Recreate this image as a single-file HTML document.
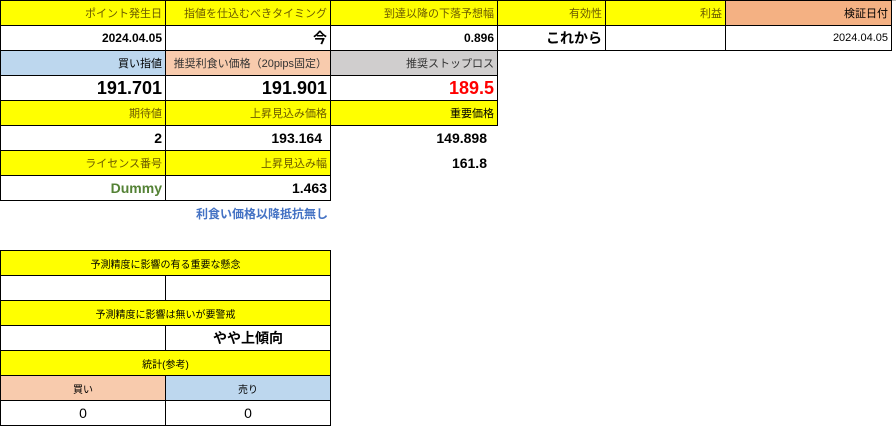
<!DOCTYPE html>
<html><head><meta charset="utf-8"><style>
body{margin:0;width:896px;height:434px;background:#fff;position:relative;overflow:hidden;font-family:"Liberation Sans","Noto Sans CJK JP",sans-serif}
.c{position:absolute;box-sizing:border-box;display:flex;align-items:center;justify-content:flex-end;padding-right:3px;font-size:11px;color:#000;white-space:nowrap}
.b{border:1px solid #000}
.y{background:#ffff00;color:#6b5a00}
.big{font-size:18px;font-weight:bold}
.m{font-size:14px;font-weight:bold}
.ctr{justify-content:center;padding-right:0}
</style></head><body>
<div style="position:absolute;left:0;top:0;width:896px;height:1px;background:#bbb"></div>
<div class="c b y" style="left:0;top:0;width:166px;height:26px">ポイント発生日</div>
<div class="c b y" style="left:165px;top:0;width:166px;height:26px">指値を仕込むべきタイミング</div>
<div class="c b y" style="left:330px;top:0;width:168px;height:26px">到達以降の下落予想幅</div>
<div class="c b y" style="left:497px;top:0;width:109px;height:26px">有効性</div>
<div class="c b y" style="left:605px;top:0;width:121px;height:26px">利益</div>
<div class="c b" style="left:725px;top:0;width:167px;height:26px;background:#f4b183">検証日付</div>
<div class="c b" style="left:0;top:25px;width:166px;height:26px;font-weight:bold;font-size:12px">2024.04.05</div>
<div class="c b m" style="left:165px;top:25px;width:166px;height:26px">今</div>
<div class="c b" style="left:330px;top:25px;width:168px;height:26px;font-weight:bold;font-size:12px">0.896</div>
<div class="c b m" style="left:497px;top:25px;width:109px;height:26px">これから</div>
<div class="c b" style="left:605px;top:25px;width:121px;height:26px"></div>
<div class="c b" style="left:725px;top:25px;width:167px;height:26px">2024.04.05</div>
<div class="c b" style="left:0;top:50px;width:166px;height:26px;background:#bdd7ee">買い指値</div>
<div class="c b" style="left:165px;top:50px;width:166px;height:26px;background:#f8cbad;color:#333">推奨利食い価格（20pips固定）</div>
<div class="c b" style="left:330px;top:50px;width:168px;height:26px;background:#d0cece;color:#333">推奨ストップロス</div>
<div class="c b big" style="left:0;top:75px;width:166px;height:26px">191.701</div>
<div class="c b big" style="left:165px;top:75px;width:166px;height:26px">191.901</div>
<div class="c b big" style="left:330px;top:75px;width:168px;height:26px;color:#ff0000">189.5</div>
<div class="c b y" style="left:0;top:100px;width:166px;height:26px">期待値</div>
<div class="c b y" style="left:165px;top:100px;width:166px;height:26px">上昇見込み価格</div>
<div class="c b y" style="left:330px;top:100px;width:168px;height:26px;color:#000">重要価格</div>
<div class="c b m" style="left:0;top:125px;width:166px;height:26px">2</div>
<div class="c b m" style="left:165px;top:125px;width:166px;height:26px;padding-right:8px">193.164</div>
<div class="c m" style="left:330px;top:125px;width:160px;height:26px">149.898</div>
<div class="c b y" style="left:0;top:150px;width:166px;height:26px">ライセンス番号</div>
<div class="c b y" style="left:165px;top:150px;width:166px;height:26px">上昇見込み幅</div>
<div class="c m" style="left:330px;top:150px;width:160px;height:26px">161.8</div>
<div class="c b m" style="left:0;top:175px;width:166px;height:26px;color:#548235">Dummy</div>
<div class="c b m" style="left:165px;top:175px;width:166px;height:26px">1.463</div>
<div class="c" style="left:165px;top:200px;width:166px;height:26px;font-weight:bold;font-size:12px;color:#4472c4">利食い価格以降抵抗無し</div>
<div class="c b y ctr" style="left:0;top:250px;width:331px;height:26px;color:#000;font-size:10px">予測精度に影響の有る重要な懸念</div>
<div class="c b" style="left:0;top:275px;width:166px;height:26px"></div>
<div class="c b" style="left:165px;top:275px;width:166px;height:26px"></div>
<div class="c b y ctr" style="left:0;top:300px;width:331px;height:26px;color:#000;font-size:10px">予測精度に影響は無いが要警戒</div>
<div class="c b" style="left:0;top:325px;width:166px;height:26px"></div>
<div class="c b ctr m" style="left:165px;top:325px;width:166px;height:26px">やや上傾向</div>
<div class="c b y ctr" style="left:0;top:350px;width:331px;height:26px;color:#000;font-size:10px">統計(参考)</div>
<div class="c b ctr" style="left:0;top:375px;width:166px;height:26px;background:#f8cbad;font-size:10px">買い</div>
<div class="c b ctr" style="left:165px;top:375px;width:166px;height:26px;background:#bdd7ee;font-size:10px">売り</div>
<div class="c b ctr" style="left:0;top:400px;width:166px;height:26px;font-size:14px">0</div>
<div class="c b ctr" style="left:165px;top:400px;width:166px;height:26px;font-size:14px">0</div>
</body></html>
